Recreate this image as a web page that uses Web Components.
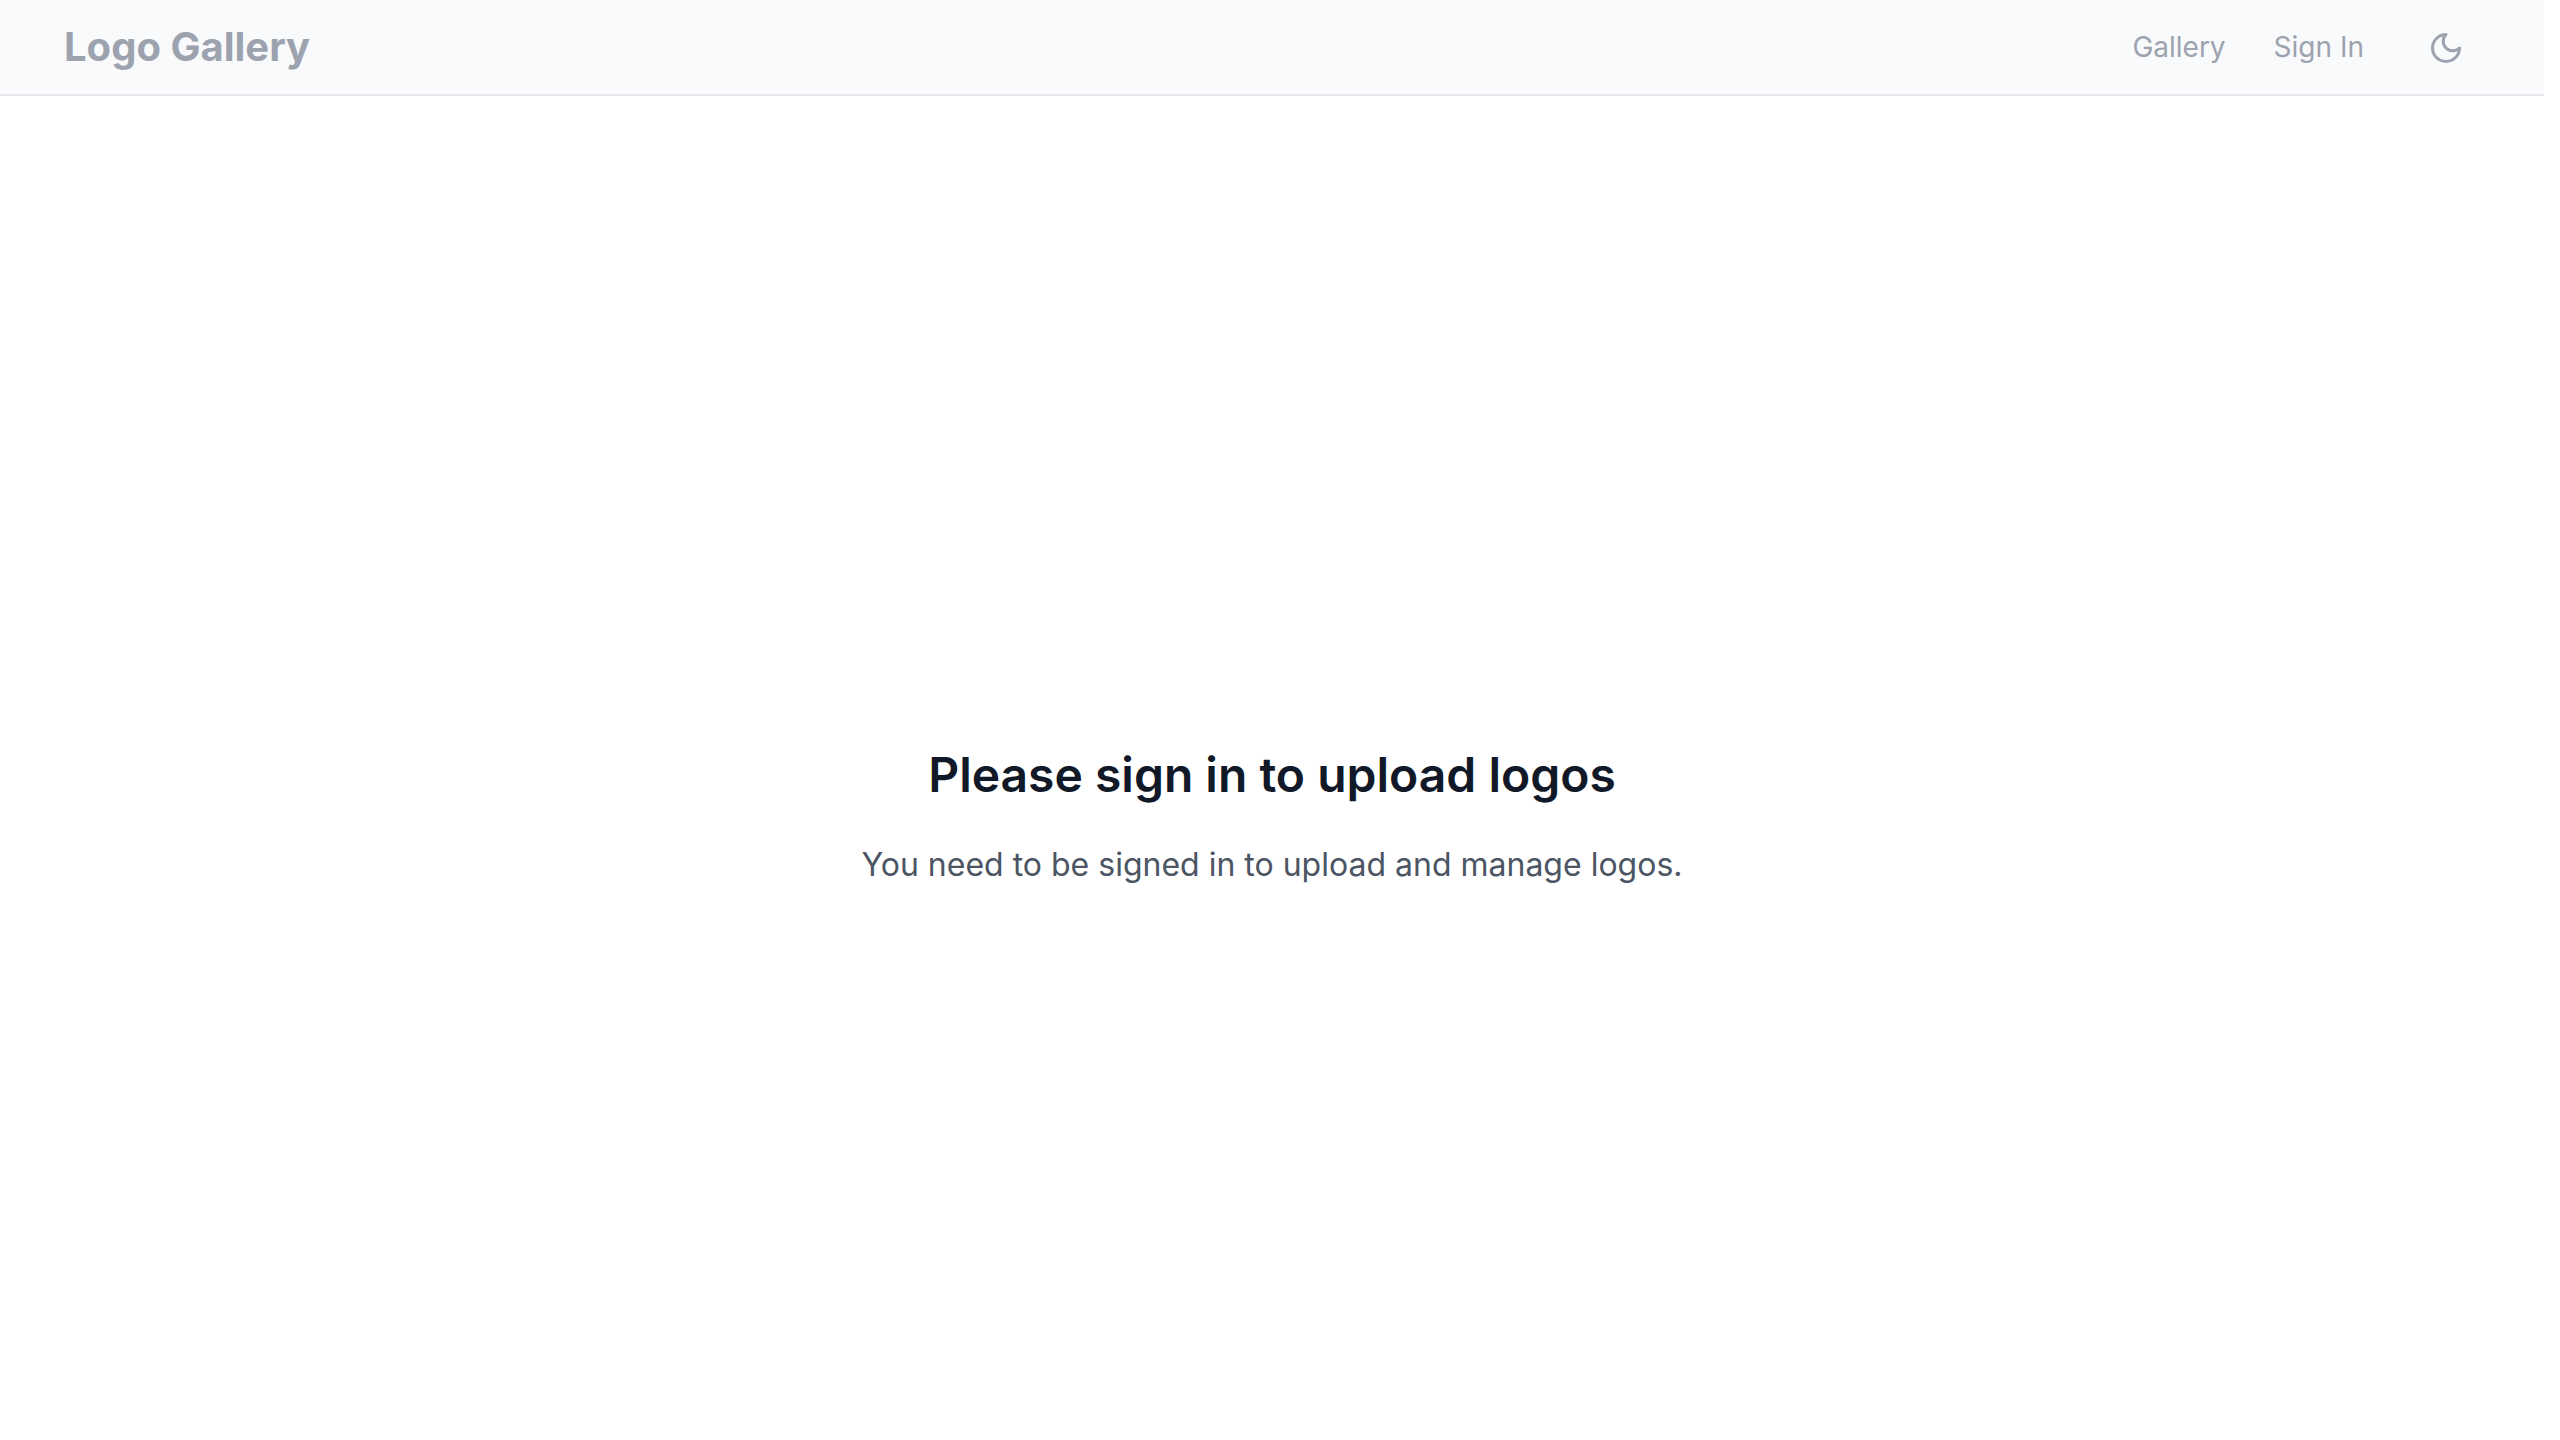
<!DOCTYPE html>
<html lang="en">
<head>
<meta charset="utf-8">
<title>Logo Gallery</title>
<style>
html, body { margin: 0; height: 100%; background: #fff; }
body { font-family: Inter, sans-serif; font-optical-sizing: none; font-variation-settings: "opsz" 14; overflow: hidden; }
</style>
</head>
<body>
<app-shell>
  <site-header slot="header">
    <span slot="brand">Logo Gallery</span>
    <nav-link>Gallery</nav-link>
    <nav-link>Sign In</nav-link>
    <theme-toggle></theme-toggle>
  </site-header>
  <empty-message>
    <span slot="title">Please sign in to upload logos</span>
    You need to be signed in to upload and manage logos.
  </empty-message>
</app-shell>
<script>
class Base extends HTMLElement {
  constructor() {
    super();
    this.attachShadow({ mode: 'open' }).innerHTML = this.constructor.markup;
  }
}
customElements.define('app-shell', class extends Base {
  static markup = `<style>
    :host { display: flex; flex-direction: column; height: 100vh; margin-right: 16px; }
    main { flex: 1; display: flex; flex-direction: column; align-items: center; padding-top: 647px; }
  </style><slot name="header"></slot><main><slot></slot></main>`;
});
customElements.define('site-header', class extends Base {
  static markup = `<style>
    :host { display: block; }
    header { box-sizing: border-box; height: 96px; padding: 0 64px; display: flex; align-items: center;
      justify-content: space-between; background: #f9fafc; border-bottom: 2px solid #e5e7eb; color: #9ca3af; }
    .brand { font-size: 40px; line-height: 56px; font-weight: 700; }
    nav { display: flex; align-items: center; gap: 48px; }
  </style><header><div class="brand"><slot name="brand"></slot></div><nav><slot></slot></nav></header>`;
});
customElements.define('nav-link', class extends Base {
  static markup = `<style>
    :host { display: block; font-size: 28px; line-height: 40px; }
    a { color: inherit; text-decoration: none; }
  </style><a><slot></slot></a>`;
});
customElements.define('theme-toggle', class extends Base {
  static markup = `<style>
    :host { display: block; }
    button { display: flex; padding: 17px 16px 15px; border: 0; background: none; color: inherit; }
    svg { display: block; width: 36px; height: 36px; }
  </style><button aria-label="Toggle theme"><svg viewBox="0 0 24 24" fill="none" stroke="currentColor"
    stroke-width="2" stroke-linecap="round" stroke-linejoin="round"><path d="M12 3a6 6 0 0 0 9 9 9 9 0 1 1-9-9Z"/></svg></button>`;
});
customElements.define('empty-message', class extends Base {
  static markup = `<style>
    :host { display: block; text-align: center; }
    h2 { margin: 0 0 34px; font-size: 48px; line-height: 64px; font-weight: 600; color: #111827; }
    p { margin: 0; font-size: 32px; line-height: 48px; color: #4b5563; }
  </style><h2><slot name="title"></slot></h2><p><slot></slot></p>`;
});
</script>
</body>
</html>
